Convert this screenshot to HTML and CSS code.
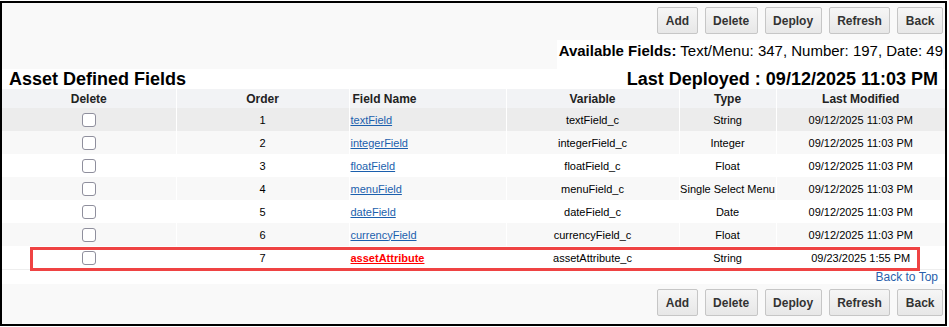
FILE: index.html
```html
<!DOCTYPE html>
<html>
<head>
<meta charset="utf-8">
<link rel="stylesheet" href="styles.css">
</head>
<body>
<div class="frame">
  <div class="toolbar">
    <div class="btns">
      <button class="btn">Add</button>
      <button class="btn">Delete</button>
      <button class="btn">Deploy</button>
      <button class="btn">Refresh</button>
      <button class="btn">Back</button>
    </div>
    <div class="avail"><b>Available Fields:</b> Text/Menu: 347, Number: 197, Date: 49</div>
  </div>
  <div class="title-row">
    <h1 class="title">Asset Defined Fields</h1>
    <h2 class="title">Last Deployed : 09/12/2025 11:03 PM</h2>
  </div>
  <table class="grid">
    <colgroup>
      <col class="c-del"><col class="c-ord"><col class="c-name"><col class="c-var"><col class="c-type"><col class="c-mod">
    </colgroup>
    <thead>
      <tr><th>Delete</th><th>Order</th><th class="left">Field Name</th><th>Variable</th><th>Type</th><th>Last Modified</th></tr>
    </thead>
    <tbody>
      <tr class="hot"><td><input type="checkbox" class="cb"></td><td>1</td><td class="left"><a href="#" class="lnk">textField</a></td><td>textField_c</td><td>String</td><td>09/12/2025 11:03 PM</td></tr>
      <tr><td><input type="checkbox" class="cb"></td><td>2</td><td class="left"><a href="#" class="lnk">integerField</a></td><td>integerField_c</td><td>Integer</td><td>09/12/2025 11:03 PM</td></tr>
      <tr><td><input type="checkbox" class="cb"></td><td>3</td><td class="left"><a href="#" class="lnk">floatField</a></td><td>floatField_c</td><td>Float</td><td>09/12/2025 11:03 PM</td></tr>
      <tr><td><input type="checkbox" class="cb"></td><td>4</td><td class="left"><a href="#" class="lnk">menuField</a></td><td>menuField_c</td><td>Single Select Menu</td><td>09/12/2025 11:03 PM</td></tr>
      <tr><td><input type="checkbox" class="cb"></td><td>5</td><td class="left"><a href="#" class="lnk">dateField</a></td><td>dateField_c</td><td>Date</td><td>09/12/2025 11:03 PM</td></tr>
      <tr><td><input type="checkbox" class="cb"></td><td>6</td><td class="left"><a href="#" class="lnk">currencyField</a></td><td>currencyField_c</td><td>Float</td><td>09/12/2025 11:03 PM</td></tr>
      <tr><td><input type="checkbox" class="cb"></td><td>7</td><td class="left"><a href="#" class="lnk new">assetAttribute</a></td><td>assetAttribute_c</td><td>String</td><td>09/23/2025 1:55 PM</td></tr>
    </tbody>
  </table>
  <div class="totop"><a href="#" class="totop-link">Back to Top</a></div>
  <div class="toolbar bottom">
    <div class="btns">
      <button class="btn">Add</button>
      <button class="btn">Delete</button>
      <button class="btn">Deploy</button>
      <button class="btn">Refresh</button>
      <button class="btn">Back</button>
    </div>
  </div>
  <div class="highlight"></div>
</div>
</body>
</html>
```
FILE: styles.css
```css
html, body {
  margin: 0;
  padding: 0;
  background: #fff;
}
body {
  font-family: "Liberation Sans", Arial, sans-serif;
  color: #000;
}
.frame {
  position: relative;
  margin: 1px 2px 1px 0;
  border: 2px solid #000;
  display: flex;
  flex-direction: column;
}
.toolbar {
  background: #f9f9f9;
  padding: 4px 2px 0 0;
  display: flex;
  flex-direction: column;
  align-items: flex-end;
  gap: 6px;
}
.toolbar.bottom {
  padding: 5px 2px 8px 0;
}
.btns {
  display: flex;
  gap: 7px;
}
.btn {
  height: 27px;
  margin: 0;
  padding: 0 7.5px;
  border: 1px solid #c6c6c6;
  border-radius: 2px;
  background: linear-gradient(#f6f6f6, #e7e7e7);
  font-family: "Liberation Sans", Arial, sans-serif;
  font-weight: bold;
  font-size: 12px;
  color: #333;
}
.avail {
  background: #fff;
  height: 29px;
  box-sizing: border-box;
  padding: 2px 0 0 2px;
  font-size: 15px;
  line-height: 17px;
  color: #000;
}
.title-row {
  display: flex;
  justify-content: space-between;
  padding: 0 7px;
  height: 20px;
}
.title {
  margin: 0;
  font-size: 18px;
  line-height: 20px;
  font-weight: bold;
}
.grid {
  width: 100%;
  border-collapse: collapse;
  table-layout: fixed;
}
.c-del { width: 174px; }
.c-ord { width: 173px; }
.c-name { width: 157px; }
.c-var { width: 173px; }
.c-type { width: 97px; }
.c-mod { width: 169px; }
.grid th {
  height: 19px;
  padding: 0;
  background: #f2f3f5;
  font-size: 12px;
  font-weight: bold;
  color: #222;
  text-align: center;
  border-right: 1px solid #fff;
}
.grid td {
  height: 23px;
  padding: 0;
  font-size: 11px;
  text-align: center;
  border-right: 1px solid #fff;
  background: #fff;
  white-space: nowrap;
}
.grid th:last-child, .grid td:last-child {
  border-right: none;
}
.grid th.left {
  text-align: left;
  padding-left: 3px;
}
.grid td.left {
  text-align: left;
  padding-left: 1px;
}
.grid tbody tr:nth-child(even) td {
  background: #f8f8f8;
}
.grid tbody tr.hot td {
  background: #ececec;
}
.cb {
  appearance: none;
  -webkit-appearance: none;
  width: 14px;
  height: 14px;
  margin: 0;
  border: 1px solid #8f8f9d;
  border-radius: 3px;
  background: #fff;
  vertical-align: middle;
}
.lnk {
  color: #1b5fad;
  text-decoration: underline;
}
.lnk.new {
  color: #f00;
  font-weight: bold;
}
.totop {
  border-top: 1px solid #eeeeee;
  height: 14px;
  text-align: right;
  padding-right: 7px;
  font-size: 12px;
  line-height: 14px;
}
.totop-link {
  color: #2a5fab;
  text-decoration: none;
}
.highlight {
  position: absolute;
  left: 28px;
  top: 244px;
  width: 890px;
  height: 24px;
  box-sizing: border-box;
  border: 3px solid #ef4343;
  pointer-events: none;
}
```
